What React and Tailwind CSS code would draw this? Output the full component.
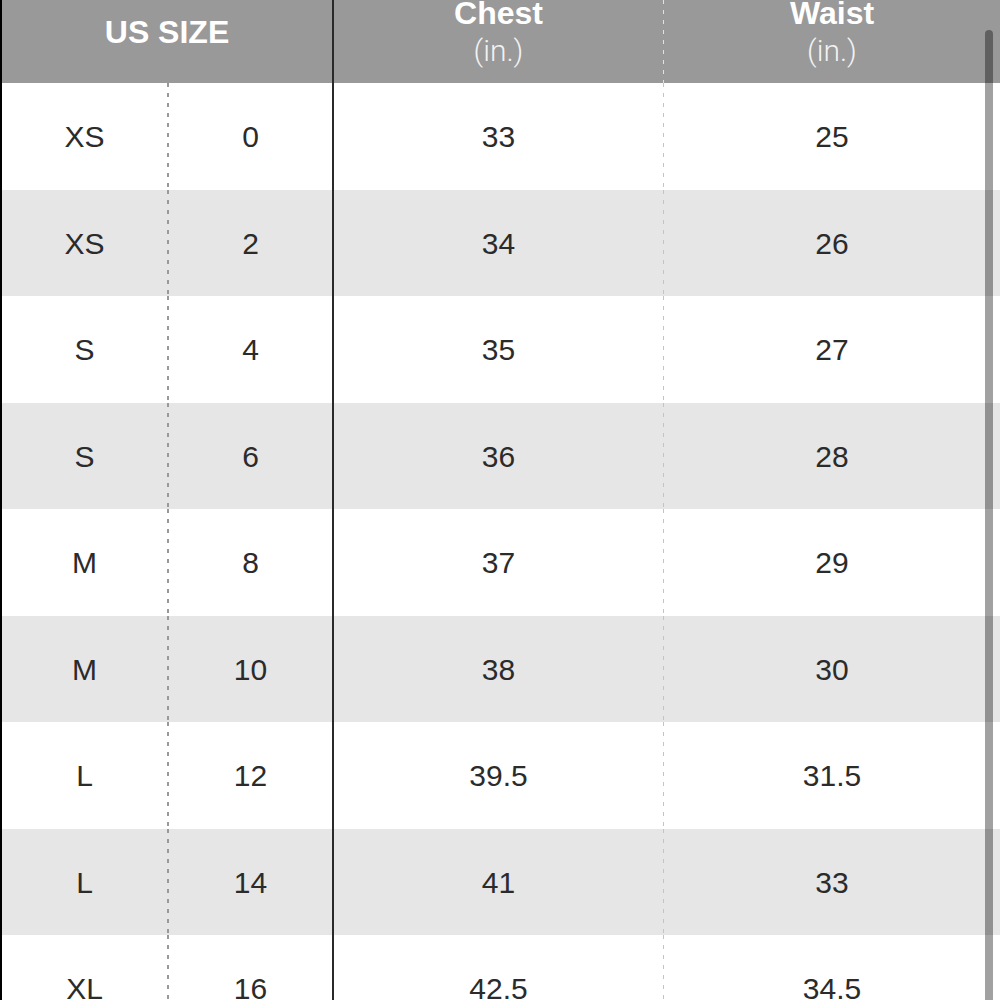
import React from "react";

const rows = [
  ["XS", "0", "33", "25"],
  ["XS", "2", "34", "26"],
  ["S", "4", "35", "27"],
  ["S", "6", "36", "28"],
  ["M", "8", "37", "29"],
  ["M", "10", "38", "30"],
  ["L", "12", "39.5", "31.5"],
  ["L", "14", "41", "33"],
  ["XL", "16", "42.5", "34.5"],
];

function DashDark() {
  return <div className="h-full w-[2px] bg-[linear-gradient(to_bottom,#999999_45%,transparent_45%)] bg-[length:2px_10px]" />;
}
function DashLight() {
  return <div className="h-full w-[1px] bg-[linear-gradient(to_bottom,#c4c4c4_45%,transparent_45%)] bg-[length:1px_10px]" />;
}

export default function App() {
  return (
    <div className="relative w-[1000px] h-[1000px] overflow-hidden bg-white border-l-2 border-black font-['Liberation_Sans',Arial,sans-serif]">
      <div className="grid grid-cols-[330px_2px_329px_1px_1fr] h-[83px] bg-[#999999] overflow-hidden">
        <div className="flex justify-center">
          <span className="mt-[16px] text-[32px] leading-[32px] font-bold text-white">US SIZE</span>
        </div>
        <div className="bg-[#2a2a2a]" />
        <div className="flex flex-col items-center -mt-[6px]">
          <span className="text-[32px] leading-[38px] font-bold text-white">Chest</span>
          <span className="text-[30px] leading-[38px] font-light text-[#f2f2f2] font-['Roboto',sans-serif]">(in.)</span>
        </div>
        <div className="h-full w-[1px] bg-[linear-gradient(to_bottom,#e2e2e2_45%,transparent_45%)] bg-[length:1px_10px]" />
        <div className="flex flex-col items-center -mt-[6px]">
          <span className="text-[32px] leading-[38px] font-bold text-white">Waist</span>
          <span className="text-[30px] leading-[38px] font-light text-[#f2f2f2] font-['Roboto',sans-serif]">(in.)</span>
        </div>
      </div>
      {rows.map((r, i) => (
        <div
          key={i}
          className={
            "grid grid-cols-[165px_2px_163px_2px_329px_1px_1fr] text-[30px] text-[#2b2b2b] " +
            (i % 2 === 0 ? "h-[107px] bg-white" : "h-[106px] bg-[#e6e6e6]")
          }
        >
          <div className="flex items-center justify-center">{r[0]}</div>
          <DashDark />
          <div className="flex items-center justify-center">{r[1]}</div>
          <div className="bg-[#2a2a2a]" />
          <div className="flex items-center justify-center">{r[2]}</div>
          <DashLight />
          <div className="flex items-center justify-center">{r[3]}</div>
        </div>
      ))}
      <div className="absolute right-[7px] top-[30px] w-[8px] h-[990px] rounded-full bg-black/[0.37]" />
    </div>
  );
}
